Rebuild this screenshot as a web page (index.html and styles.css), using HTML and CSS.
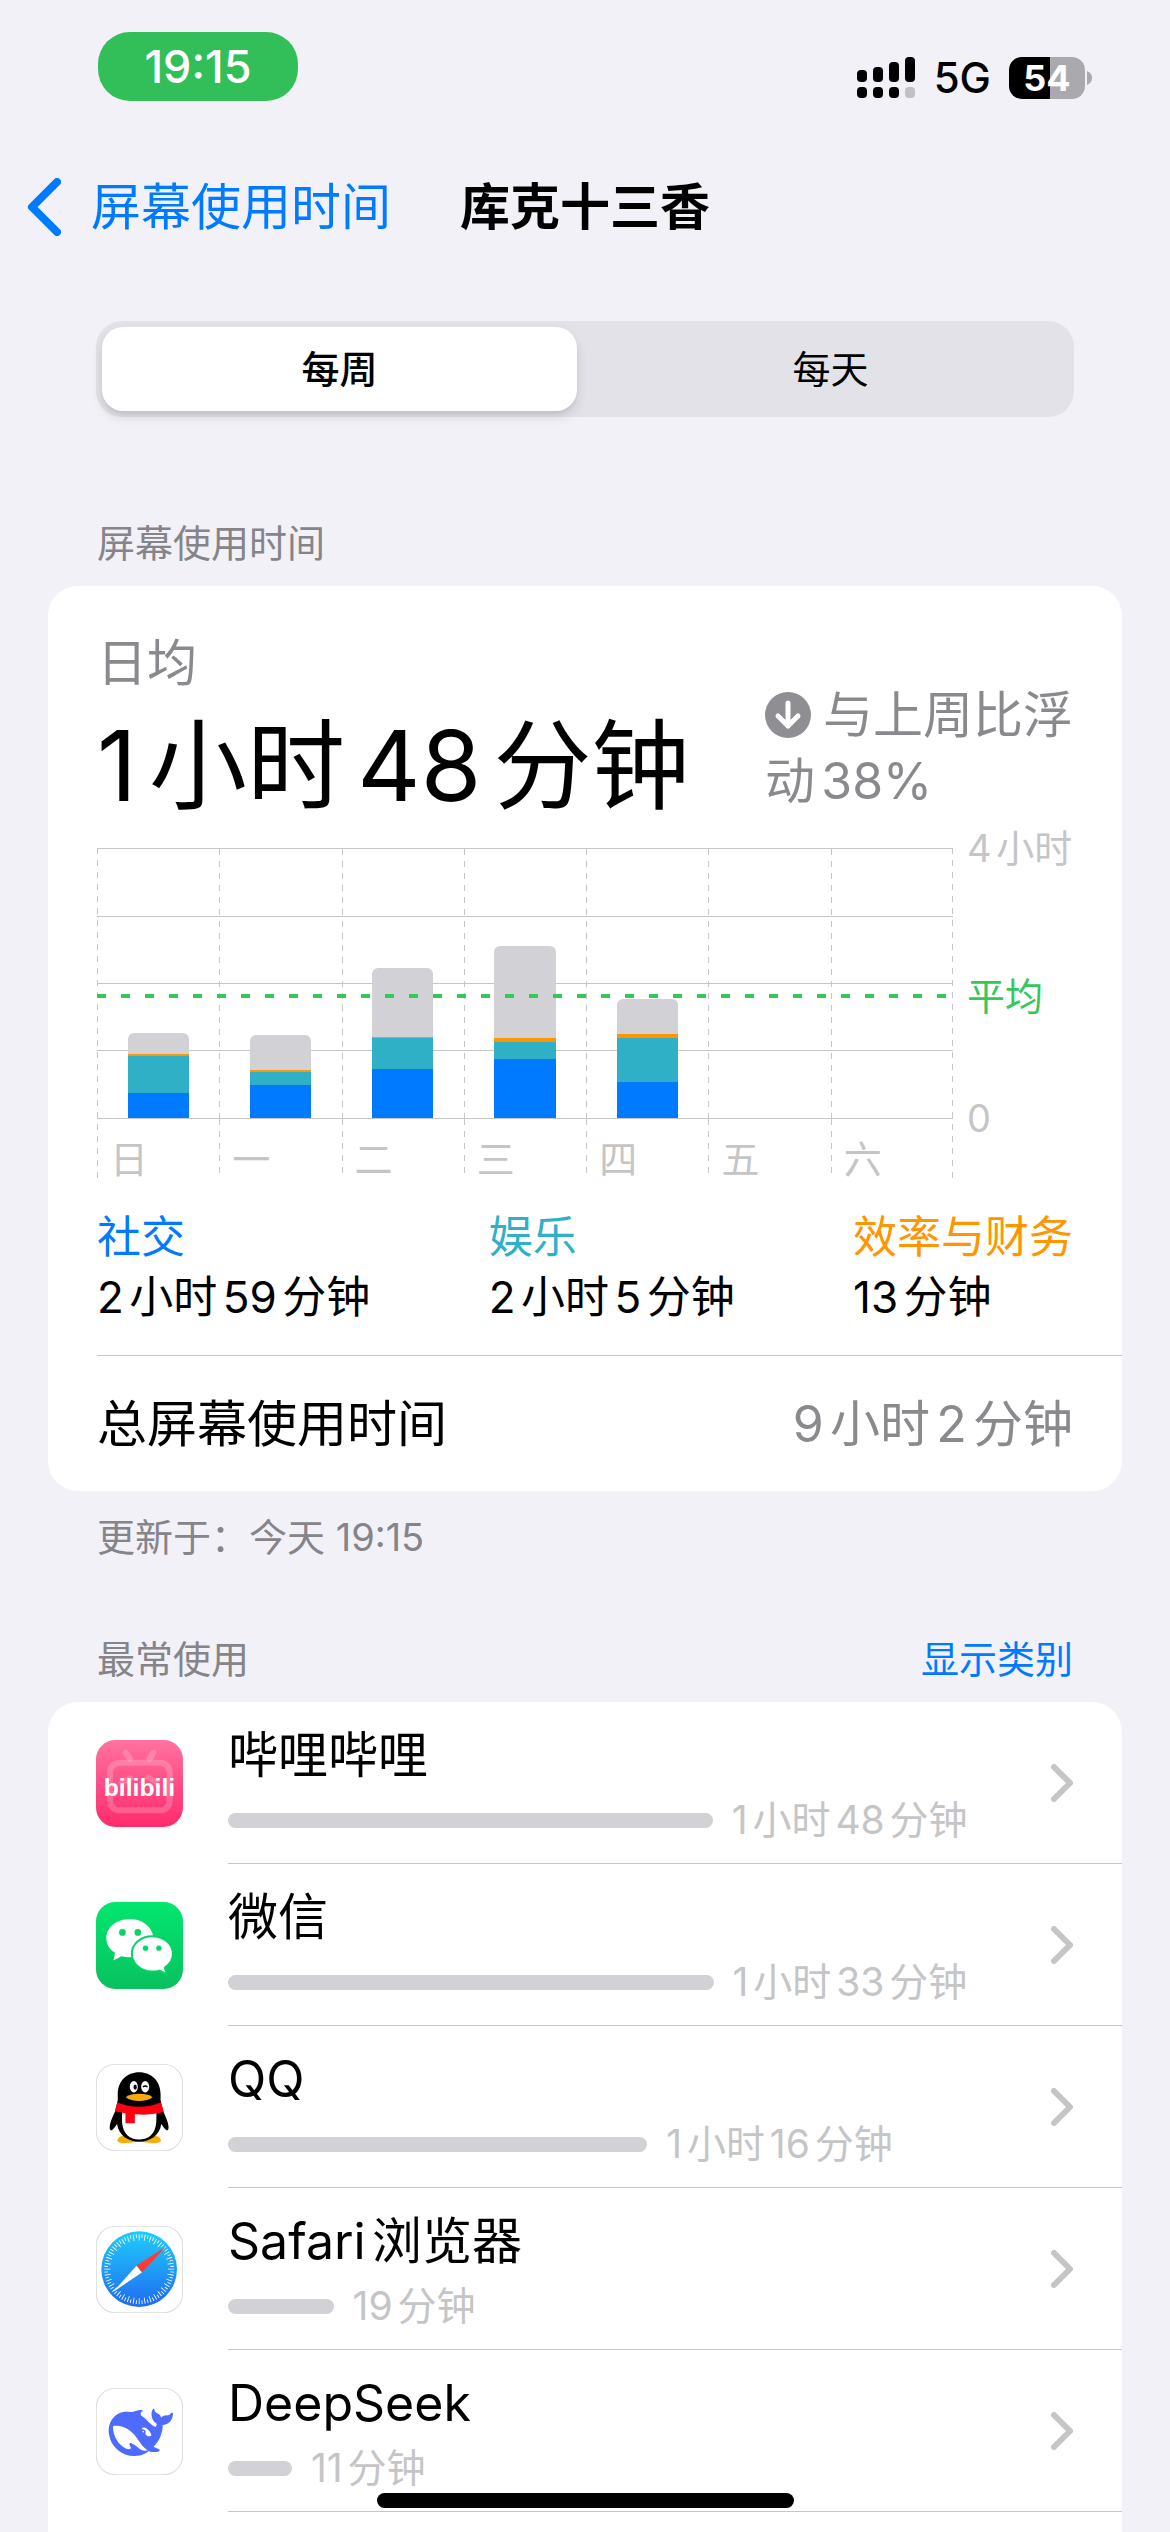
FILE: index.html
```html
<!DOCTYPE html>
<html lang="zh-CN">
<head>
<meta charset="UTF-8">
<meta name="viewport" content="width=device-width, initial-scale=1.0">
<title>屏幕使用时间</title>
<link rel="stylesheet" href="styles.css">
</head>
<body>
  <div class="status-bar">
    <div class="clock">19:15</div>
    <div class="status-icons">
      <svg class="signal" viewBox="0 0 58 42">
        <rect x="0" y="13" width="10" height="12" rx="4"/>
        <rect x="16" y="10" width="10" height="15" rx="4"/>
        <rect x="32" y="5" width="10" height="20" rx="4"/>
        <rect x="48" y="0" width="10" height="25" rx="4"/>
        <rect x="0" y="30" width="10" height="11" rx="4"/>
        <rect x="16" y="30" width="10" height="11" rx="4"/>
        <rect x="32" y="30" width="10" height="11" rx="4"/>
        <rect x="48" y="30" width="10" height="11" rx="4" fill="#c0c0c5"/>
      </svg>
      <span class="network">5G</span>
      <span class="battery">54</span>
      <svg class="battery-tip" viewBox="0 0 5 14"><path d="M0 0Q5 2 5 7T0 14Z" fill="#aaa9ae"/></svg>
    </div>
  </div>

  <header class="nav">
    <a class="back" href="#">
      <svg viewBox="0 0 34 58"><path d="M30 4L5 29l25 25"/></svg>
      <span>屏幕使用时间</span>
    </a>
    <h1>库克十三香</h1>
  </header>

  <div class="segments">
    <button class="segment active" type="button">每周</button>
    <button class="segment" type="button">每天</button>
  </div>

  <h2 class="section-title">屏幕使用时间</h2>
  <section class="card">
    <div class="summary">
      <div class="average">
        <p class="label">日均</p>
        <p class="value">1小时48分钟</p>
      </div>
      <p class="change"><svg viewBox="0 0 46 46"><circle cx="23" cy="23" r="23" fill="#8e8e93"/><path d="M23 11v23M13 24l10 10 10-10"/></svg>与上周比浮<br>动38%</p>
    </div>

    <div class="chart">
      <div class="plot">
        <div class="days">
          <div class="day"><div class="bar">
            <i class="other" style="height: 21px"></i><i class="work" style="height: 2px"></i><i class="fun" style="height: 37px"></i><i class="social" style="height: 25px"></i>
          </div></div>
          <div class="day"><div class="bar">
            <i class="other" style="height: 35px"></i><i class="work" style="height: 2px"></i><i class="fun" style="height: 13px"></i><i class="social" style="height: 33px"></i>
          </div></div>
          <div class="day"><div class="bar">
            <i class="other" style="height: 69px"></i><i class="work" style="height: 1px"></i><i class="fun" style="height: 31px"></i><i class="social" style="height: 49px"></i>
          </div></div>
          <div class="day"><div class="bar">
            <i class="other" style="height: 92px"></i><i class="work" style="height: 4px"></i><i class="fun" style="height: 17px"></i><i class="social" style="height: 59px"></i>
          </div></div>
          <div class="day"><div class="bar">
            <i class="other" style="height: 35px"></i><i class="work" style="height: 4px"></i><i class="fun" style="height: 44px"></i><i class="social" style="height: 36px"></i>
          </div></div>
          <div class="day"></div>
          <div class="day"></div>
        </div>
        <div class="average-line"></div>
        <div class="day-names">
          <span>日</span><span>一</span><span>二</span><span>三</span><span>四</span><span>五</span><span>六</span>
        </div>
      </div>
      <div class="axis">
        <span>4小时</span>
        <span class="axis-average">平均</span>
        <span>0</span>
      </div>
    </div>

    <dl class="legend">
      <div><dt class="social-text">社交</dt><dd>2小时59分钟</dd></div>
      <div><dt class="fun-text">娱乐</dt><dd>2小时5分钟</dd></div>
      <div><dt class="work-text">效率与财务</dt><dd>13分钟</dd></div>
    </dl>

    <div class="total">
      <span>总屏幕使用时间</span>
      <span class="total-value">9小时2分钟</span>
    </div>
  </section>
  <p class="updated">更新于：今天 19:15</p>

  <div class="list-header">
    <h2>最常使用</h2>
    <a href="#">显示类别</a>
  </div>
  <section class="card app-list">
    <a class="app" href="#">
      <svg class="icon" viewBox="0 0 260 260">
        <defs><linearGradient id="pink" x2="0" y2="1"><stop stop-color="#ff729f"/><stop offset="1" stop-color="#ff2b6d"/></linearGradient></defs>
        <rect width="260" height="260" rx="58" fill="url(#pink)"/>
        <g fill="none" stroke="#fff" stroke-opacity=".2" stroke-width="18" stroke-linecap="round">
          <rect x="42" y="68" width="178" height="142" rx="28"/>
          <path d="M89 38l12 18M172 38l-12 18M76 128l26-13M156 112l24 13"/>
        </g>
        <text x="130" y="168" text-anchor="middle" class="bili">bilibili</text>
      </svg>
      <div class="app-body">
        <div class="app-row">
          <span class="app-name">哔哩哔哩</span>
          <span class="usage"><i style="width: 60.6%"></i>1小时48分钟</span>
        </div>
        <svg class="chevron" viewBox="0 0 22 38"><path d="M3 3l16 16L3 35"/></svg>
      </div>
    </a>
    <a class="app" href="#">
      <svg class="icon" viewBox="0 0 260 260">
        <defs><linearGradient id="green" x2="0" y2="1"><stop stop-color="#02e66e"/><stop offset="1" stop-color="#09c15f"/></linearGradient></defs>
        <rect width="260" height="260" rx="58" fill="url(#green)"/>
        <path fill="#fff" d="M101 51c-39 0-70 25-70 57 0 18 9 33 26 44l-5 23 24-13c8 2 16 3 25 3 39 0 70-26 70-57s-31-57-70-57z"/>
        <path fill="#fff" stroke="#06d267" stroke-width="6" d="M168 102c-34 0-61 24-61 53s27 53 61 53c8 0 15-1 22-3l21 11-5-20c15-10 24-24 24-41 0-29-28-53-62-53z"/>
        <g fill="#05d568"><circle cx="79" cy="91" r="10"/><circle cx="125" cy="91" r="10"/><circle cx="148" cy="138" r="8"/><circle cx="188" cy="138" r="8"/></g>
      </svg>
      <div class="app-body">
        <div class="app-row">
          <span class="app-name">微信</span>
          <span class="usage"><i style="width: 60.7%"></i>1小时33分钟</span>
        </div>
        <svg class="chevron" viewBox="0 0 22 38"><path d="M3 3l16 16L3 35"/></svg>
      </div>
    </a>
    <a class="app" href="#">
      <svg class="icon" viewBox="0 0 260 260">
        <rect x="1" y="1" width="258" height="258" rx="57" fill="#fff" stroke="#dcdcdc" stroke-width="3"/>
        <path fill="#faab07" d="M64 229c0-12 22-20 40-18h50c20-2 40 6 40 18 0 10-46 8-65 0-19 8-65 10-65 0z"/>
        <path d="M129 25c-37 0-64 27-64 65v18l-8 34c-12 24-20 48-14 55 5 4 13-8 20-18 4 34 34 53 66 53s62-19 66-53c7 10 15 22 20 18 6-7-2-31-14-55l-8-34V90c0-38-27-65-64-65z"/>
        <path fill="#fff" d="M80 134h99c2 12 2 26 1 40-2 34-23 52-51 52s-49-18-51-52c-1-14 0-28 2-40z"/>
        <path fill="#ff0012" d="M64 115c40 17 90 17 130 0l9 28c-25 8-54 10-87 7v27H88v-30c-12-2-24-4-32-6z"/>
        <g fill="#fff"><ellipse cx="113" cy="68" rx="12" ry="17"/><ellipse cx="147" cy="68" rx="12" ry="17"/></g>
        <ellipse cx="117" cy="69" rx="5" ry="8"/>
        <path d="M140 69q7-7 14 0" fill="none" stroke="#000" stroke-width="4"/>
        <path fill="#faab07" d="M89 99c18-13 62-13 80 0-18 15-62 15-80 0z"/>
      </svg>
      <div class="app-body">
        <div class="app-row">
          <span class="app-name">QQ</span>
          <span class="usage"><i style="width: 52.4%"></i>1小时16分钟</span>
        </div>
        <svg class="chevron" viewBox="0 0 22 38"><path d="M3 3l16 16L3 35"/></svg>
      </div>
    </a>
    <a class="app" href="#">
      <svg class="icon" viewBox="0 0 260 260">
        <defs><linearGradient id="sky" x2="0" y2="1"><stop stop-color="#1fcdfb"/><stop offset="1" stop-color="#1f6bf1"/></linearGradient></defs>
        <rect x="1" y="1" width="258" height="258" rx="57" fill="#fff" stroke="#dcdcdc" stroke-width="3"/>
        <circle cx="129" cy="129" r="113" fill="url(#sky)"/>
        <g fill="none" stroke="#fff">
          <circle cx="129" cy="129" r="99" stroke-width="11" pathLength="144" stroke-dasharray=".6 1.4" stroke-dashoffset=".3"/>
          <circle cx="129" cy="129" r="90" stroke-width="8" pathLength="144" stroke-dasharray=".6 3.4" stroke-dashoffset=".3"/>
        </g>
        <path fill="#ff3b30" d="M209 61l-88 58 16 20z"/>
        <path fill="#fff" d="M50 198l71-79 16 20z"/>
      </svg>
      <div class="app-body">
        <div class="app-row">
          <span class="app-name">Safari浏览器</span>
          <span class="usage"><i style="width: 13.2%"></i>19分钟</span>
        </div>
        <svg class="chevron" viewBox="0 0 22 38"><path d="M3 3l16 16L3 35"/></svg>
      </div>
    </a>
    <a class="app" href="#">
      <svg class="icon" viewBox="0 0 260 260">
        <rect x="1" y="1" width="258" height="258" rx="57" fill="#fff" stroke="#dcdcdc" stroke-width="3"/>
        <path transform="translate(38 38) scale(8)" fill="#4d6bfe" d="M23.748 4.482c-.254-.124-.364.113-.512.234-.051.039-.094.09-.137.136-.372.397-.806.657-1.373.626-.829-.046-1.537.214-2.163.848-.133-.782-.575-1.248-1.247-1.548-.352-.156-.708-.311-.955-.65-.172-.241-.219-.51-.305-.774-.055-.16-.11-.323-.293-.35-.2-.031-.278.136-.356.276-.313.572-.434 1.202-.422 1.84.027 1.436.633 2.58 1.838 3.393.137.093.172.187.129.323-.082.28-.18.552-.266.833-.055.179-.137.217-.329.14a5.526 5.526 0 01-1.736-1.18c-.857-.828-1.631-1.742-2.597-2.458a11.365 11.365 0 00-.689-.471c-.985-.957.13-1.743.388-1.836.27-.098.093-.432-.779-.428-.872.004-1.67.295-2.687.684a3.055 3.055 0 01-.465.137 9.597 9.597 0 00-2.883-.102c-1.885.21-3.39 1.102-4.497 2.623C.082 8.606-.231 10.684.152 12.85c.403 2.284 1.569 4.175 3.36 5.653 1.858 1.533 3.997 2.284 6.438 2.14 1.482-.085 3.133-.284 4.994-1.86.47.234.962.327 1.78.397.63.059 1.236-.03 1.705-.128.735-.156.684-.837.419-.961-2.155-1.004-1.682-.595-2.113-.926 1.096-1.296 2.746-2.642 3.392-7.003.05-.347.007-.565 0-.845-.004-.17.035-.237.23-.256a4.173 4.173 0 001.545-.475c1.396-.763 1.96-2.015 2.093-3.517.02-.23-.004-.467-.247-.588zM11.581 18c-2.089-1.642-3.102-2.183-3.52-2.16-.392.024-.321.471-.235.763.09.288.207.486.371.739.114.167.192.416-.113.603-.673.416-1.842-.14-1.897-.167-1.361-.802-2.5-1.86-3.301-3.307-.774-1.393-1.224-2.887-1.298-4.482-.02-.386.093-.522.477-.592a4.696 4.696 0 011.529-.039c2.132.312 3.946 1.265 5.468 2.774.868.86 1.525 1.887 2.202 2.891.72 1.066 1.494 2.082 2.48 2.914.348.292.625.514.891.677-.802.09-2.14.11-3.054-.614zm1-6.44a.306.306 0 01.415-.287.302.302 0 01.2.288.306.306 0 01-.31.307.303.303 0 01-.304-.308zm3.11 1.596c-.2.081-.399.151-.59.16a1.245 1.245 0 01-.798-.254c-.274-.23-.47-.358-.552-.758a1.73 1.73 0 01.016-.588c.07-.327-.008-.537-.239-.727-.187-.156-.426-.199-.688-.199a.559.559 0 01-.254-.078c-.11-.054-.2-.19-.114-.358.028-.054.16-.186.192-.21.356-.202.767-.136 1.146.016.352.144.618.408 1.001.782.391.451.462.576.685.914.176.265.336.537.445.848.067.195-.019.354-.25.452z"/>
      </svg>
      <div class="app-body">
        <div class="app-row">
          <span class="app-name">DeepSeek</span>
          <span class="usage"><i style="width: 8%"></i>11分钟</span>
        </div>
        <svg class="chevron" viewBox="0 0 22 38"><path d="M3 3l16 16L3 35"/></svg>
      </div>
    </a>
  </section>

  <div class="home-indicator"></div>
</body>
</html>
```

FILE: styles.css
```css
* {
  box-sizing: border-box;
}

body {
  margin: 0;
  min-height: 100vh;
  display: flex;
  flex-direction: column;
  background-color: #f2f1f7;
  color: #000;
  font-family: Inter, "Noto Sans CJK SC", sans-serif;
  font-size: 50px;
  line-height: 60px;
  text-autospace: normal;
}

h1, h2, p, dl, dd {
  margin: 0;
  font-size: inherit;
  font-weight: 400;
}

a {
  color: #007aff;
  text-decoration: none;
}

svg {
  display: block;
  flex-shrink: 0;
}

/* status bar */
.status-bar {
  display: flex;
  justify-content: space-between;
  align-items: flex-start;
  padding: 32px 78px 0 98px;
}

.clock {
  width: 200px;
  border-radius: 32px;
  background-color: #32be58;
  color: white;
  font-size: 45px;
  font-weight: 500;
  line-height: 69px;
  text-align: center;
}

.status-icons {
  display: flex;
  align-items: center;
  margin-top: 25px;
  line-height: 42px;
}

.signal {
  width: 58px;
  height: 42px;
  margin-right: 19px;
}

.network {
  margin-right: 18px;
  font-size: 42px;
  font-weight: 500;
}

.battery {
  width: 76px;
  border-radius: 13px;
  background: linear-gradient(to right, #000 54%, #aaa9ae 54%);
  color: white;
  font-size: 36px;
  font-weight: 700;
  text-align: center;
}

.battery-tip {
  width: 5px;
  height: 14px;
  margin-left: 2px;
}

/* navigation */
.nav {
  display: grid;
  grid-template-columns: 1fr auto 1fr;
  align-items: center;
  margin-top: 76px;
  padding: 0 27px;
}

.back {
  display: flex;
  align-items: center;
  gap: 30px;
}

.back svg {
  width: 34px;
  height: 58px;
}

.back path, .chevron path, .change path {
  fill: none;
  stroke-linecap: round;
  stroke-linejoin: round;
}

.back path {
  stroke: #007aff;
  stroke-width: 8;
}

.nav h1 {
  font-weight: 600;
}

.segments {
  display: flex;
  gap: 16px;
  margin: 84px 96px 0;
  padding: 6px;
  border-radius: 26px;
  background-color: #e3e2e8;
}

.segment {
  flex: 1;
  padding: 12px 0;
  border: none;
  border-radius: 21px;
  background: none;
  color: #000;
  font: 400 38px/60px Inter, "Noto Sans CJK SC", sans-serif;
}

.segment.active {
  background-color: white;
  box-shadow: 0 6px 12px rgba(0, 0, 0, 0.12), 0 3px 3px rgba(0, 0, 0, 0.04);
  font-weight: 500;
}

/* cards */
.section-title, .updated, .list-header {
  padding: 0 97px;
  color: #858489;
  font-size: 38px;
}

.section-title {
  margin-top: 96px;
}

.card {
  margin: 13px 48px 0;
  border-radius: 30px;
  background-color: white;
}

.summary {
  display: flex;
  justify-content: space-between;
  align-items: flex-end;
  padding: 47px 49px 0;
}

.average .label {
  color: #8a8a8e;
}

.average .value {
  margin-top: 13px;
  font-size: 98px;
  line-height: 120px;
}

.change {
  padding-bottom: 12px;
  color: #8a8a8e;
  line-height: 66px;
  white-space: nowrap;
}

.change svg {
  display: inline-block;
  width: 46px;
  height: 46px;
  margin-right: 12px;
  vertical-align: -5px;
}

.change path {
  stroke: white;
  stroke-width: 5;
}

/* weekly chart */
.chart {
  display: flex;
  gap: 14px;
  margin-top: 22px;
  padding: 0 49px;
  color: #c5c5c7;
  font-size: 38px;
}

.plot {
  flex: 1;
  position: relative;
  background:
    repeating-linear-gradient(to bottom, transparent 0 6px, white 6px 12px),
    linear-gradient(#c6c6c8, #c6c6c8) left / 1px 100% no-repeat,
    linear-gradient(#c6c6c8, #c6c6c8) right / 1px 100% no-repeat;
}

.days, .day-names {
  display: grid;
  grid-template-columns: repeat(7, 1fr);
}

.days {
  height: 271px;
  border-top: 1px solid #c6c6c8;
  border-bottom: 1px solid #c6c6c8;
  background:
    linear-gradient(#c6c6c8, #c6c6c8) 0 25% / 100% 1px no-repeat,
    linear-gradient(#c6c6c8, #c6c6c8) 0 50% / 100% 1px no-repeat,
    linear-gradient(#c6c6c8, #c6c6c8) 0 75% / 100% 1px no-repeat;
}

.day, .day-names span {
  background: repeating-linear-gradient(to bottom, #c6c6c8 0 6px, transparent 6px 12px) left / 1px 100% no-repeat;
}

.day:first-child, .day-names span:first-child {
  background: none;
}

.day {
  display: flex;
  justify-content: center;
  align-items: flex-end;
}

.bar {
  width: 50%;
  border-radius: 6px 6px 0 0;
  overflow: hidden;
}

.bar i {
  display: block;
}

.other {
  background-color: #d1d1d6;
}

.work {
  background-color: #ff9500;
}

.fun {
  background-color: #30b0c7;
}

.social {
  background-color: #007aff;
}

.average-line {
  position: absolute;
  top: 146px;
  left: 0;
  right: 0;
  height: 4px;
  background: repeating-linear-gradient(to right, #34c759 0 9px, transparent 9px 24px);
}

.day-names span {
  padding: 20px 0 0 13px;
  line-height: 40px;
}

.axis {
  width: 106px;
  margin-top: -20px;
  line-height: 40px;
  white-space: nowrap;
}

.axis span {
  display: block;
}

.axis .axis-average {
  margin: 108px 0 82px;
  color: #34c759;
}

.legend {
  display: flex;
  justify-content: space-between;
  padding: 28px 49px;
  font-size: 44px;
}

.social-text {
  color: #007aff;
}

.fun-text {
  color: #30b0c7;
}

.work-text {
  color: #ff9500;
}

.total {
  display: flex;
  justify-content: space-between;
  margin-left: 49px;
  padding: 38px 49px 37px 0;
  border-top: 1px solid #c6c6c8;
}

.total-value {
  color: #8a8a8e;
}

.updated {
  margin-top: 16px;
}

/* most used apps */
.list-header {
  display: flex;
  justify-content: space-between;
  margin-top: 62px;
}

.app-list {
  flex: 1;
  border-radius: 30px 30px 0 0;
}

.app {
  display: flex;
  align-items: center;
  padding-left: 48px;
  color: #000;
}

.icon {
  width: 87px;
  height: 87px;
  margin-right: 45px;
}

.bili {
  fill: white;
  font: 700 74px "Liberation Sans", sans-serif;
}

.app-body {
  flex: 1;
  display: flex;
  align-items: center;
  height: 162px;
  padding-right: 49px;
  border-bottom: 1px solid #c6c6c8;
}

.app-row {
  flex: 1;
  margin-right: 23px;
  padding-top: 10px;
}

.app-name {
  display: block;
}

.usage {
  display: flex;
  align-items: center;
  gap: 19px;
  margin-top: 5px;
  color: #c5c5c7;
  font-size: 39px;
  white-space: nowrap;
}

.usage i {
  height: 15px;
  border-radius: 8px;
  background-color: #d1d1d6;
}

.chevron {
  width: 22px;
  height: 38px;
}

.chevron path {
  stroke: #c5c5c7;
  stroke-width: 6;
}

.home-indicator {
  position: fixed;
  bottom: 24px;
  left: 50%;
  width: 417px;
  height: 15px;
  margin-left: -208px;
  border-radius: 8px;
  background-color: black;
}
```
